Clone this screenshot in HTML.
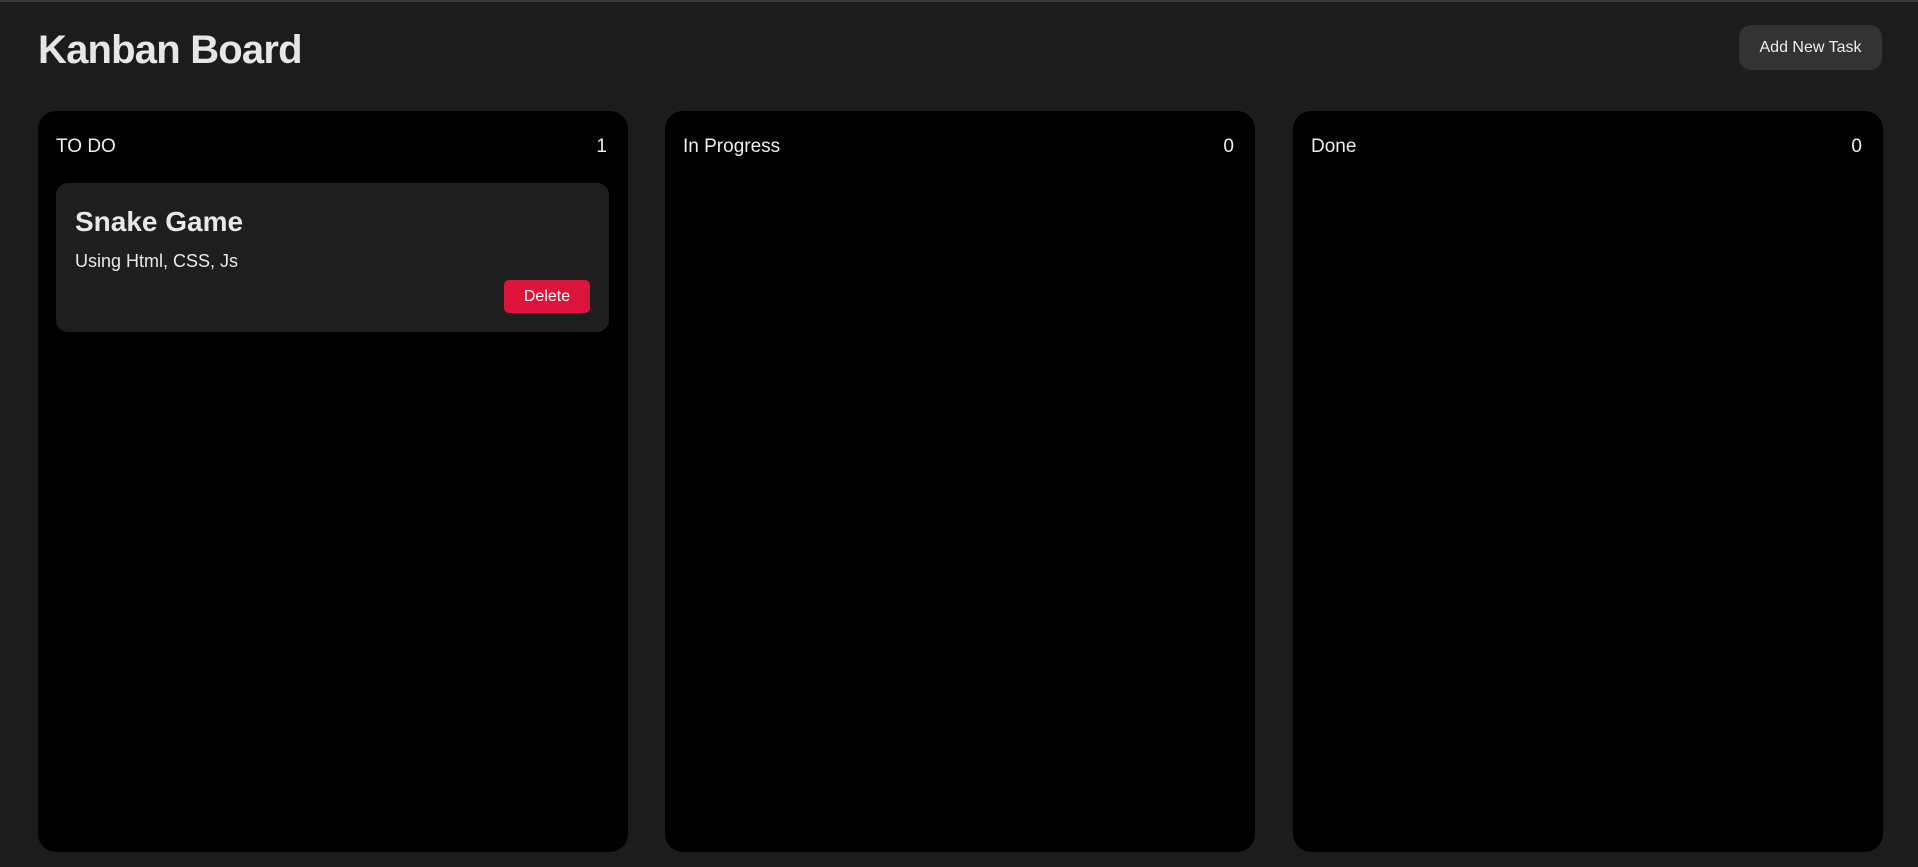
<!DOCTYPE html>
<html><head><meta charset="utf-8"><style>
html,body{margin:0;padding:0;}
body{width:1918px;height:867px;background:#1c1c1c;position:relative;overflow:hidden;font-family:"Liberation Sans",sans-serif;color:#eee;border-top:2px solid #3a3a3a;box-sizing:border-box;}
h1{position:absolute;left:38px;top:24px;margin:0;font-size:40px;font-weight:bold;letter-spacing:-0.8px;line-height:48px;color:#e6e6e6;}
.add{position:absolute;left:1739px;top:23px;width:143px;height:45px;background:#333;border-radius:12px;font-size:16px;line-height:45px;text-align:center;color:#eee;}
.col{position:absolute;top:109px;width:590px;height:741px;background:#000;border-radius:18px;}
.hd{position:absolute;left:18px;right:21px;top:25px;font-size:19px;display:flex;justify-content:space-between;}
.card{position:absolute;left:18px;top:72px;width:553px;height:149px;background:#1e1e1e;border-radius:12px;}
.card h2{position:absolute;left:19px;top:23px;margin:0;font-size:28px;font-weight:bold;color:#e8e8e8;}
.card p{position:absolute;left:19px;top:68px;margin:0;font-size:18px;color:#e8e8e8;}
.del{position:absolute;left:448px;top:97px;width:86px;height:33px;background:#dc143c;border-radius:5px;font-size:16px;line-height:33px;text-align:center;color:#fff;}
</style></head><body>
<h1>Kanban Board</h1>
<div class="add">Add New Task</div>
<div class="col" style="left:38px"><div class="hd"><span>TO DO</span><span>1</span></div>
<div class="card"><h2>Snake Game</h2><p>Using Html, CSS, Js</p><div class="del">Delete</div></div></div>
<div class="col" style="left:665px"><div class="hd"><span>In Progress</span><span>0</span></div></div>
<div class="col" style="left:1293px"><div class="hd"><span>Done</span><span>0</span></div></div>
</body></html>
